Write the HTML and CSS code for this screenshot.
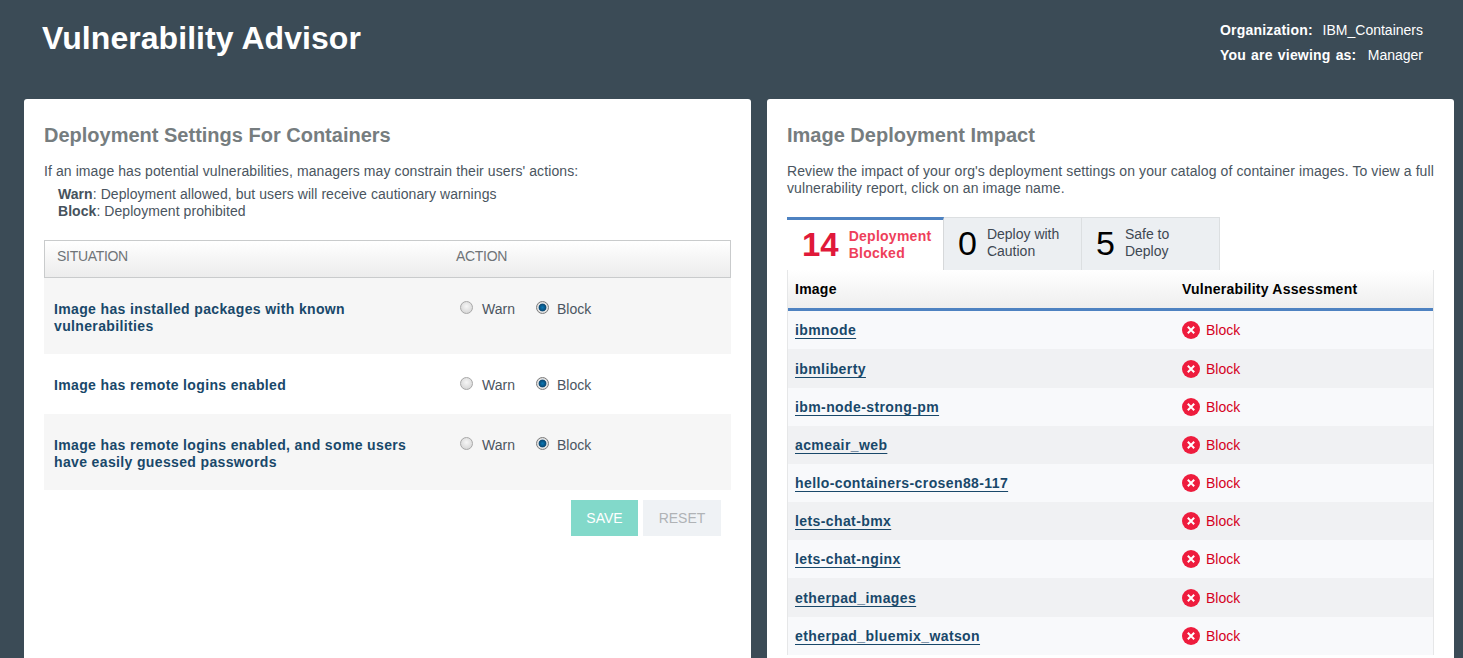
FILE: index.html
```html
<!DOCTYPE html>
<html lang="en">
<head>
<meta charset="utf-8">
<title>Vulnerability Advisor</title>
<link rel="stylesheet" href="styles.css">
</head>
<body>
<svg class="sprite" width="0" height="0" aria-hidden="true">
  <symbol id="x" viewBox="0 0 18 18"><circle cx="9" cy="9" r="9" fill="#ee1c3d"/><path d="M5.8 5.8l6.4 6.4M12.2 5.8l-6.4 6.4" stroke="#fff" stroke-width="2" fill="none"/></symbol>
</svg>
<header class="top">
  <h1 class="brand">Vulnerability Advisor</h1>
  <dl class="meta">
    <div class="meta-row"><dt>Organization:</dt><dd>IBM_Containers</dd></div>
    <div class="meta-row"><dt class="wide">You are viewing as:</dt><dd>Manager</dd></div>
  </dl>
</header>
<main class="panels">
  <section class="card card-left">
    <h2 class="card-title">Deployment Settings For Containers</h2>
    <p class="intro">If an image has potential vulnerabilities, managers may constrain their users' actions:</p>
    <ul class="defs">
      <li><b>Warn</b>: Deployment allowed, but users will receive cautionary warnings</li>
      <li><b>Block</b>: Deployment prohibited</li>
    </ul>
    <div class="set-head"><span class="col-sit">SITUATION</span><span>ACTION</span></div>
    <div class="set-row tall shaded">
      <div class="sit">Image has installed packages with known vulnerabilities</div>
      <div class="radios"><span class="radio"></span><span class="rlabel">Warn</span><span class="radio on"></span><span class="rlabel">Block</span></div>
    </div>
    <div class="set-row short">
      <div class="sit">Image has remote logins enabled</div>
      <div class="radios"><span class="radio"></span><span class="rlabel">Warn</span><span class="radio on"></span><span class="rlabel">Block</span></div>
    </div>
    <div class="set-row tall shaded">
      <div class="sit">Image has remote logins enabled, and some users have easily guessed passwords</div>
      <div class="radios"><span class="radio"></span><span class="rlabel">Warn</span><span class="radio on"></span><span class="rlabel">Block</span></div>
    </div>
    <div class="actions">
      <button class="btn save" type="button">SAVE</button>
      <button class="btn reset" type="button">RESET</button>
    </div>
  </section>
  <section class="card card-right">
    <h2 class="card-title">Image Deployment Impact</h2>
    <p class="intro review">Review the impact of your org's deployment settings on your catalog of container images. To view a full vulnerability report, click on an image name.</p>
    <div class="tabs">
      <div class="tab active"><span class="num">14</span><span class="tlabel">Deployment<br>Blocked</span></div>
      <div class="tab t2"><span class="num">0</span><span class="tlabel">Deploy with<br>Caution</span></div>
      <div class="tab t3"><span class="num">5</span><span class="tlabel">Safe to<br>Deploy</span></div>
    </div>
    <div class="tbl">
      <div class="thead"><span class="c1">Image</span><span>Vulnerability Assessment</span></div>
      <div class="tr"><a class="c1" href="#">ibmnode</a><span class="st"><svg class="ic"><use href="#x"/></svg>Block</span></div>
      <div class="tr"><a class="c1" href="#">ibmliberty</a><span class="st"><svg class="ic"><use href="#x"/></svg>Block</span></div>
      <div class="tr"><a class="c1" href="#">ibm-node-strong-pm</a><span class="st"><svg class="ic"><use href="#x"/></svg>Block</span></div>
      <div class="tr"><a class="c1" href="#">acmeair_web</a><span class="st"><svg class="ic"><use href="#x"/></svg>Block</span></div>
      <div class="tr"><a class="c1" href="#">hello-containers-crosen88-117</a><span class="st"><svg class="ic"><use href="#x"/></svg>Block</span></div>
      <div class="tr"><a class="c1" href="#">lets-chat-bmx</a><span class="st"><svg class="ic"><use href="#x"/></svg>Block</span></div>
      <div class="tr"><a class="c1" href="#">lets-chat-nginx</a><span class="st"><svg class="ic"><use href="#x"/></svg>Block</span></div>
      <div class="tr"><a class="c1" href="#">etherpad_images</a><span class="st"><svg class="ic"><use href="#x"/></svg>Block</span></div>
      <div class="tr"><a class="c1" href="#">etherpad_bluemix_watson</a><span class="st"><svg class="ic"><use href="#x"/></svg>Block</span></div>
    </div>
  </section>
</main>
</body>
</html>
```
FILE: styles.css
```css
* { box-sizing: border-box; }
html, body { margin: 0; height: 658px; overflow: hidden; }
body { background: #3b4b56; font-family: "Liberation Sans", Arial, sans-serif; font-size: 14px; color: #4a5560; letter-spacing: 0.09px; }
.sprite { position: absolute; }

.top { height: 99px; display: flex; justify-content: space-between; padding: 0 40px 0 42px; color: #fff; }
.brand { margin: 18px 0 0; font-size: 32px; line-height: 40px; font-weight: 700; letter-spacing: 0.06px; }
.meta { margin: 18px 0 0; width: 203px; font-size: 14px; line-height: 25px; }
.meta-row { display: flex; justify-content: space-between; }
.meta dt { font-weight: 700; letter-spacing: 0.2px; }
.meta dt.wide { word-spacing: 1px; }
.meta dd { margin: 0; letter-spacing: 0; }

.panels { display: flex; gap: 16px; padding: 0 9px 0 24px; }
.card { background: #fff; border-radius: 3px 3px 0 0; height: 559px; padding: 0 20px; flex: none; overflow: hidden; }
.card-left { width: 727px; }
.card-right { width: 687px; }
.card-title { margin: 24px 0 0; font-size: 20px; line-height: 24px; font-weight: 700; color: #767d7f; letter-spacing: 0; }
.intro { margin: 16px 0 0; line-height: 17px; }
.review { letter-spacing: 0.1px; }
.defs { list-style: none; margin: 6px 0 0; padding: 0 0 0 14px; line-height: 17px; letter-spacing: 0.06px; }
.defs b { color: #46525c; }

.set-head { margin-top: 20px; height: 38px; border: 1px solid #c9cbcc; background: linear-gradient(#fff, #ececec); display: flex; padding: 7px 0 0 12px; line-height: 17px; color: #6f7478; letter-spacing: -0.3px; }
.col-sit { width: 399px; }
.set-row { display: flex; padding: 22px 0 0 10px; }
.tall { height: 76px; }
.short { height: 60px; }
.shaded { background: #f6f6f6; }
.sit { width: 370px; padding-top: 1px; font-weight: 700; color: #19486a; line-height: 17px; letter-spacing: 0.36px; }
.radios { margin-left: 36px; display: flex; align-items: center; height: 17px; }
.radio { width: 13px; height: 13px; border-radius: 50%; border: 1px solid #a8a8a8; background: radial-gradient(circle at 50% 40%, #f6f6f6, #cfcfcf); flex: none; margin-top: -2px; }
.radio.on { margin-right: -1px; background: radial-gradient(circle, #0a78b5 0, #0b4a75 45%, #e4e4e4 55%, #d2d2d2 100%); border-color: #7c7c7c; }
.rlabel { margin-left: 9px; margin-right: 21px; color: #4b5561; letter-spacing: 0; }
.actions { display: flex; justify-content: flex-end; gap: 5px; padding: 10px 10px 0 0; }
.btn { height: 36px; border: 0; padding: 0; font: 14px "Liberation Sans", Arial, sans-serif; }
.save { width: 67px; background: #82d9ca; color: #fff; }
.reset { width: 78px; background: #eff2f5; color: #b0b3b6; }

.tabs { display: flex; margin-top: 20px; height: 53px; }
.tab { display: flex; align-items: center; padding-bottom: 2px; background: #eceff2; border: 1px solid #dcdfe1; border-left: 0; border-bottom: 0; line-height: 17px; color: #3e4852; letter-spacing: 0; }
.tab.active { width: 157px; background: #fff; border-top: 3px solid #4e82c1; border-right: 1px solid #d6d8da; color: #ee3f5b; padding: 0 0 0 15px; font-weight: 700; }
.t2 { width: 138px; padding-left: 14px; }
.t3 { width: 138px; padding-left: 14px; }
.num { font-size: 34px; line-height: 40px; color: #000; margin-right: 10px; }
.active .num { color: #e0193a; font-weight: 700; margin-right: 10px; font-size: 33px; }
.tlabel { display: block; }
.active .tlabel { letter-spacing: 0.25px; }

.tbl { width: 647px; border-left: 1px solid #e6e7e8; border-right: 1px solid #e6e7e8; }
.thead { height: 41px; border-bottom: 3px solid #4e82c1; background: linear-gradient(#fff, #eeeeee); display: flex; align-items: center; font-weight: 700; color: #000; letter-spacing: 0.25px; }
.c1 { width: 387px; margin-left: 7px; flex: none; }
.tr { height: 38px; display: flex; align-items: center; background: #f8f9fb; }
.tr:nth-child(odd) { background: #f0f1f3; }
.tr:nth-child(3), .tr:nth-child(9) { height: 39px; }
.tr a { font-weight: 700; color: #19486a; letter-spacing: 0.4px; text-decoration-skip-ink: none; text-underline-offset: 3px; }
.st { display: flex; align-items: center; color: #d5001e; letter-spacing: 0; }
.ic { width: 18px; height: 18px; margin-right: 6px; }
```
